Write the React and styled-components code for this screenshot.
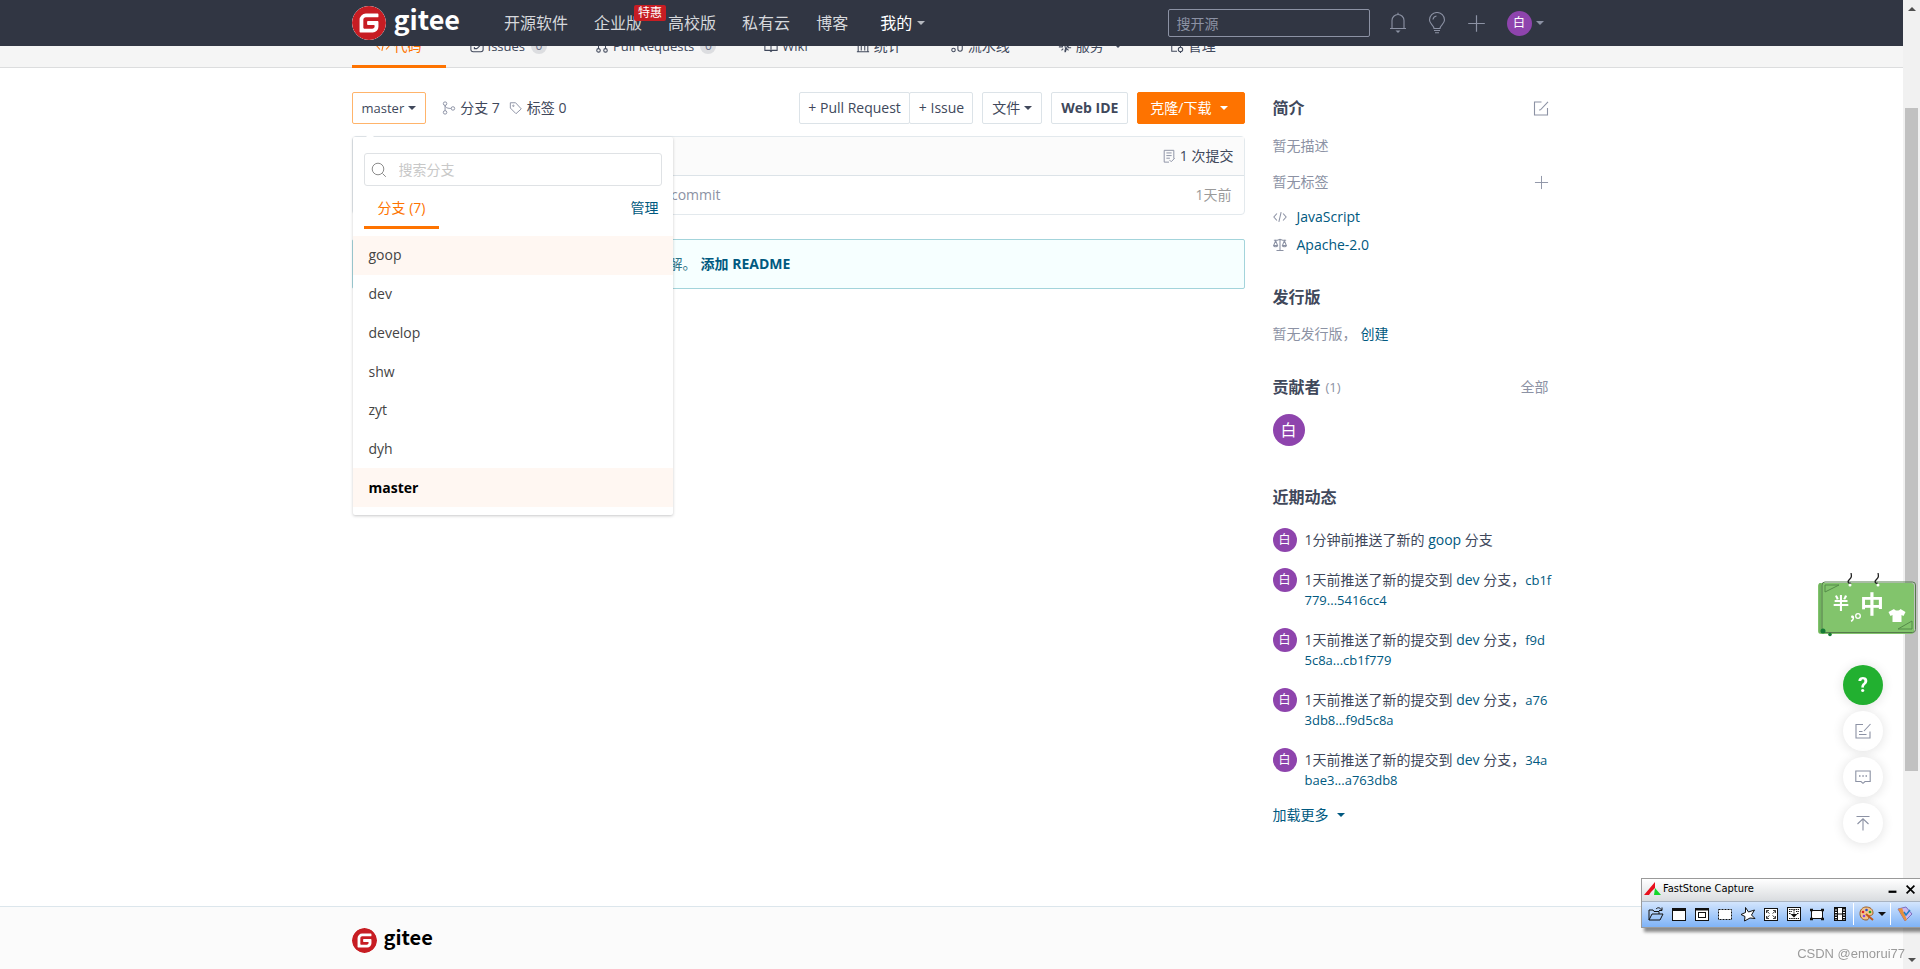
import * as React from 'react';
import styled, { createGlobalStyle, css } from 'styled-components';
import { SiGitee } from 'react-icons/si';

const GlobalStyle = createGlobalStyle`
  * { box-sizing: border-box; }
  body {
    margin: 0;
    overflow: hidden;
    color: #40485b;
    background: #fff;
    font: 14px/20px "Open Sans", "Noto Sans CJK SC", sans-serif;
  }
  button, input {
    font: inherit;
    color: inherit;
  }
  button {
    padding: 0;
    border: none;
    background: none;
    cursor: pointer;
  }
  a { color: #005980; text-decoration: none; }
  h2, p, ul { margin: 0; padding: 0; }
  ul { list-style: none; }
  svg { display: block; flex: none; }
`;

const Screen = styled.div`
  display: flex;
  min-height: 100vh;
`;

const Page = styled.div`
  flex: 1;
  min-width: 0;
  display: flex;
  flex-direction: column;
`;

const Container = styled.div`
  width: 1200px;
  max-width: 100%;
  margin: 0 auto;
`;

/* ---------- icons ---------- */

const Icon = ({ size = 14, w = size, h = size, box = '0 0 16 16', stroke = 1.2, children }) => (
  <svg width={w} height={h} viewBox={box} fill="none" stroke="currentColor" strokeWidth={stroke} aria-hidden="true">
    {children}
  </svg>
);

const CodeIcon = () => <Icon><path d="M4.500 4 1 8l3.500 4M11.500 4 15 8l-3.500 4M9.300 2.500 6.700 13.500" /></Icon>;
const IssueIcon = () => <Icon><rect x="1" y="1" width="14" height="13.500" rx="2.500" /><path d="M5 9v2h3M8 11l4-4" /></Icon>;
const PullIcon = () => <Icon><circle cx="4" cy="13" r="2" /><circle cx="12" cy="13" r="2" /><circle cx="4" cy="3" r="2" /><path d="M4 5v6M12 11V3H8" /></Icon>;
const WikiIcon = () => <Icon><path d="M8 3v11M1 2.500h5L8 4l2-1.500h5v10.500H9.500L8 14.300 6.500 13H1z" /></Icon>;
const StatIcon = () => <Icon><path d="M1 14.500h14M2.500 14V2h11v12M6 13V7M10 13V5" /></Icon>;
const PipeIcon = () => <Icon><circle cx="4" cy="12.500" r="2" /><circle cx="4" cy="4" r="2" /><path d="M6 4h3v7.500a2.500 2.500 0 0 0 5 0V4" /></Icon>;
const ServiceIcon = () => <Icon><path d="M1 9h4l2-6 2 10 2-6 1 3h3M8 12v3M4 13l2-2M12 13l-2-2" /></Icon>;
const ManageIcon = () => <Icon><path d="M8 14H2V2h8l3 3M5 7h4" /><circle cx="12" cy="12" r="2.500" /><path d="M12 8v1.500M12 14.500V16" /></Icon>;
const BranchIcon = () => (
  <Icon stroke={1.1}>
    <circle cx="3.500" cy="3" r="2" /><circle cx="3.500" cy="13" r="2" /><circle cx="12.500" cy="8.500" r="2" />
    <path d="M3.500 5v6M3.500 5c0 3 4 3.500 7 3.500" />
  </Icon>
);
const TagIcon = () => <Icon stroke={1.1}><path d="M1.500 2v6l6.500 6.500 6-5.500L7.500 2z" /><circle cx="5" cy="5.500" r=".8" /></Icon>;
const SearchIcon = () => <Icon size={16} stroke={1}><circle cx="7" cy="7" r="5.800" /><path d="m11.500 11.500 3.300 3.300" /></Icon>;
const CommitIcon = () => (
  <Icon stroke={1.1}>
    <path d="M8 15H2.500V1.500h11V11M5 4.500h6M5 7.500h6M5 10.500h4" /><path d="m8.500 12.500 2 2 4-4" />
  </Icon>
);
const EditIcon = () => <Icon size={16} stroke={1.1}><path d="M8.500 2H1.500v13h13V8M6 10l1.500-.2 7.500-8" /></Icon>;
const PlusIcon = ({ size }) => <Icon size={size} stroke={1}><path d="M8 1v14M1 8h14" /></Icon>;
const ScaleIcon = () => (
  <Icon>
    <path d="M1 2.500h4l3-1 3 1h4M8 1v13M4 14.200h8M3 3 .8 8.500h4.400zM13 3l-2.200 5.500h4.400z" />
    <path d="M.8 8.500a2.200 1.500 0 0 0 4.400 0M10.800 8.500a2.200 1.500 0 0 0 4.400 0" />
  </Icon>
);
const BellIcon = () => (
  <Icon w={18} h={22} box="0 0 18 22" stroke={1.1}>
    <path d="M1 16.500h16M3 16V8.500a6 6 0 0 1 12 0V16M9 2.500V.8" />
    <path d="M6.500 18.500h5L9 21z" fill="currentColor" stroke="none" />
  </Icon>
);
const BulbIcon = () => (
  <Icon w={18} h={22} box="0 0 18 22" stroke={1.1}>
    <path d="M6 16.500c0-3-4.500-4.500-4.500-8.500a7.500 7.500 0 0 1 15 0c0 4-4.500 5.500-4.500 8.500zM6 18.500h6M7 20.800h4M5 7.500A4 4 0 0 1 8.500 4" />
  </Icon>
);
const NoteIcon = () => <Icon size={16} stroke={1.1}><path d="M8 1.500H1v13.500h14V8.500M4 11.500h7.500M4 8.500h3.500M9 8l6.500-7" /></Icon>;
const ChatIcon = () => (
  <Icon size={16} stroke={1.1}>
    <path d="M.8 2h14.400v10.500H10L8 14.300l-2-1.800H.8z" />
    <path d="M4 7h1.500M7.300 7h1.500M10.500 7H12" strokeWidth="1.500" />
  </Icon>
);
const TopIcon = () => <Icon size={16} stroke={1.1}><path d="M1.500 1.500h13M8 15.500V4M2.500 9 8 3.800 13.500 9" /></Icon>;

const Caret = styled.i`
  display: inline-block;
  flex: none;
  border: 4px solid transparent;
  border-top-color: ${p => p.$color || 'currentColor'};
  border-bottom: none;
`;

/* ---------- logo ---------- */

const LogoLink = styled.a`
  display: flex;
  align-items: center;
  gap: ${p => (p.$small ? 7 : 8)}px;
  color: ${p => (p.$small ? '#000' : '#fff')};
  font: bold ${p => (p.$small ? 20 : 27)}px/${p => (p.$small ? 16 : 24)}px "Noto Sans CJK SC", sans-serif;
  svg {
    color: #c71d23;
    background: #fff;
    border-radius: 50%;
  }
  span { padding-bottom: ${p => (p.$small ? 8 : 9)}px; }
`;

const Logo = ({ small }) => (
  <LogoLink href="#" $small={small}>
    <SiGitee size={small ? 25 : 34} />
    <span>gitee</span>
  </LogoLink>
);

const Avatar = styled.span`
  display: flex;
  align-items: center;
  justify-content: center;
  flex: none;
  width: ${p => p.$size}px;
  height: ${p => p.$size}px;
  border-radius: 50%;
  color: #fff;
  background: #8e44ad;
  font-size: ${p => (p.$size > 30 ? 16 : 12)}px;
`;

/* ---------- top bar ---------- */

const Header = styled.header`
  position: sticky;
  top: 0;
  z-index: 10;
  height: 46px;
  background: #313643;
  color: #8c92a4;
`;

const HeaderRow = styled(Container)`
  display: flex;
  align-items: center;
  height: 46px;
`;

const MainNav = styled.nav`
  display: flex;
  gap: 26px;
  margin-left: 44px;
  font-size: 16px;
`;

const NavLink = styled.a`
  position: relative;
  color: ${p => (p.$active ? '#fff' : '#d6d8dc')};
  ${p => p.$active && css`
    display: flex;
    align-items: center;
    gap: 5px;
    margin-left: 6px;
  `}
`;

const Promo = styled.span`
  position: absolute;
  left: 40px;
  top: -8px;
  z-index: 1;
  width: 32px;
  border-radius: 2px;
  color: #fff;
  background: #c71d23;
  font-size: 12px;
  line-height: 16px;
  text-align: center;
`;

const SiteSearch = styled.input`
  width: 202px;
  height: 28px;
  margin-left: auto;
  padding: 0 8px;
  border: 1px solid #8c92a4;
  border-radius: 2px;
  background: transparent;
  &::placeholder { color: #8c92a4; }
`;

const UserTools = styled.div`
  display: flex;
  align-items: center;
  gap: 21px;
  margin: 0 8px 0 19px;
`;

const UserButton = styled.button`
  display: flex;
  align-items: center;
  gap: 4px;
`;

/* ---------- project tabs ---------- */

/* the page is scrolled, so the bar starts behind the header */
const TabBar = styled.div`
  margin-top: -20px;
  border-bottom: 1px solid #dcddde;
  background: #f5f5f5;
`;

const TabRow = styled(Container)`
  display: flex;
`;

const Tab = styled.a`
  display: flex;
  align-items: center;
  gap: 4px;
  height: 42px;
  margin-bottom: -1px;
  padding: 0 24px;
  border-bottom: 3px solid ${p => (p.$active ? '#fe7300' : 'transparent')};
  color: ${p => (p.$active ? '#fe7300' : '#40485b')};
  font-size: ${p => (p.$latin ? 13 : 14)}px;
  ${Caret} { margin-left: 6px; }
`;

const Count = styled.span`
  width: 16px;
  margin-left: 2px;
  border-radius: 8px;
  background: #dcdde0;
  color: #6b7289;
  font-size: 12px;
  line-height: 16px;
  text-align: center;
`;

/* ---------- repository ---------- */

const Body = styled(Container)`
  display: flex;
  gap: 28px;
  padding: 24px 0 81px;
`;

const Main = styled.main`
  flex: 1;
  min-width: 0;
`;

const Toolbar = styled.div`
  position: relative;
  display: flex;
  align-items: center;
  gap: 9px;
  margin-bottom: 12px;
`;

const Button = styled.button`
  display: flex;
  align-items: center;
  justify-content: center;
  gap: 4px;
  height: 32px;
  padding: 0 9px;
  border: 1px solid #dce3e8;
  border-radius: 2px;
  background: #fff;
  white-space: nowrap;
  ${p => p.$open && css`
    border-color: #ffb46b;
    font-size: 13px;
  `}
  ${p => p.$strong && css`font-weight: bold;`}
  ${p => p.$primary && css`
    gap: 8px;
    padding: 0 16px 0 12px;
    border-color: #fe7300;
    background: #fe7300;
    color: #fff;
  `}
`;

const ButtonGroup = styled.div`
  display: flex;
  margin-left: auto;
  ${Button} { padding: 0 8px; }
  ${Button} + ${Button} { margin-left: -1px; padding-left: 9px; }
`;

const Stat = styled.a`
  display: flex;
  align-items: center;
  gap: 4px;
  color: #40485b;
  svg { color: #8c92a4; }
  &:first-of-type { margin-left: 7px; }
`;

const Files = styled.div`
  border: 1px solid #e3e9ed;
  border-radius: 4px;
`;

const FileRow = styled.div`
  display: flex;
  align-items: center;
  justify-content: flex-end;
  gap: 4px;
  height: 38px;
  padding: 0 12px;
  color: #9a9a9a;
  ${p => p.$head && css`
    height: 39px;
    padding-right: 10px;
    border-bottom: 1px solid #dce3e8;
    background: #fbfbfb;
    color: #40485b;
    svg { color: #8c92a4; }
  `}
`;

const Message = styled.span`
  width: 356px;
  margin-right: auto;
  color: #8c92a4;
  text-align: right;
`;

const ReadmeTip = styled.div`
  display: flex;
  gap: 4px;
  margin-top: 24px;
  padding: 14px 19px;
  border: 1px solid #a3d4db;
  border-radius: 2px;
  background: #f6ffff;
  color: #2f7488;
  a { font-weight: bold; }
`;

const TipText = styled.span`
  width: 325px;
  text-align: right;
`;

/* ---------- branch menu ---------- */

const Menu = styled.div`
  position: absolute;
  left: 1px;
  top: 45px;
  z-index: 5;
  width: 320px;
  padding: 16px 0 8px;
  border-radius: 2px;
  background: #fff;
  box-shadow: 0 1px 3px rgba(34, 36, 38, .25);
  &::before {
    content: '';
    position: absolute;
    left: 13px;
    top: -4px;
    border: 4px solid transparent;
    border-top: none;
    border-bottom-color: #fff;
  }
`;

const MenuSearch = styled.label`
  display: flex;
  align-items: center;
  gap: 12px;
  height: 33px;
  margin: 0 11px;
  padding: 0 6px;
  border: 1px solid #dfe2e5;
  border-radius: 3px;
  color: #8c8c8c;
  input {
    flex: 1;
    min-width: 0;
    padding: 0;
    border: none;
    outline: none;
  }
  input::placeholder { color: #c8c8c8; }
`;

const MenuTabs = styled.div`
  display: flex;
  align-items: flex-start;
  justify-content: space-between;
  margin: 0 14px 7px 11px;
  padding-top: 12px;
`;

const MenuTab = styled.button`
  padding: 0 14px 8px;
  border-bottom: 3px solid #fe7300;
  color: #fe7300;
`;

const Branches = styled.ul`
  display: flex;
  flex-direction: column;
  height: 271px;
`;

const Branch = styled.li`
  flex: 1;
  display: flex;
  align-items: center;
  padding: 0 16px;
  color: ${p => (p.$current ? '#000' : '#444')};
  font-weight: ${p => (p.$current ? 'bold' : 'normal')};
  background: ${p => (p.$lit ? '#fff7f2' : 'transparent')};
`;

/* ---------- sidebar ---------- */

const Side = styled.aside`
  width: 279px;
`;

const Section = styled.section`
  margin-bottom: ${p => p.$gap}px;
`;

const SideTitle = styled.h2`
  display: flex;
  align-items: center;
  gap: 5px;
  height: 32px;
  font-size: 16px;
  small { font-size: 13px; font-weight: normal; color: #8c92a4; }
  a, button { margin-left: auto; margin-right: 3px; font-size: 14px; font-weight: normal; color: #8c92a4; }
`;

const Muted = styled.p`
  display: flex;
  align-items: center;
  justify-content: space-between;
  height: 36px;
  padding-right: 3px;
  color: #8c92a4;
`;

const About = styled.div`
  padding: 4px 0 3px;
`;

const Release = styled(Muted)`
  justify-content: flex-start;
  gap: 4px;
  margin-top: 3px;
`;

const Meta = styled.a`
  display: flex;
  align-items: center;
  gap: 10px;
  height: 28px;
  svg { color: #8c92a4; }
`;

const People = styled.div`
  padding-top: 11px;
`;

const Feed = styled.ul`
  padding-top: 15px;
`;

const FeedItem = styled.li`
  display: flex;
  gap: 8px;
  margin-bottom: 20px;
  &:last-child { margin-bottom: 17px; }
  p { padding-top: 2px; margin-bottom: -2px; word-break: break-all; }
  ${Avatar} { margin-bottom: -4px; }
`;

const Hash = styled.a`
  font-size: 13px;
`;

const More = styled.button`
  display: flex;
  align-items: center;
  gap: 8px;
  height: 20px;
  color: #005980;
`;

const Footer = styled.footer`
  flex: 1;
  padding-top: 21px;
  border-top: 1px solid #dce6ec;
  background: #fbfbfb;
`;

/* ---------- things floating over the page ---------- */

const Floats = styled.div`
  position: fixed;
  right: 37px;
  top: 665px;
  display: flex;
  flex-direction: column;
  gap: 6px;
`;

const Round = styled.button`
  display: flex;
  align-items: center;
  justify-content: center;
  width: 40px;
  height: 40px;
  border-radius: 50%;
  color: ${p => (p.$green ? '#fff' : '#8c92a4')};
  background: ${p => (p.$green ? '#22b030' : '#fff')};
  box-shadow: 0 1px 12px rgba(0, 0, 0, .12);
  font: bold 20px/24px Roboto, sans-serif;
`;

const Scrollbar = styled.div`
  position: relative;
  z-index: 11;
  display: flex;
  flex-direction: column;
  align-items: center;
  justify-content: space-between;
  width: 17px;
  height: 100vh;
  padding: 7px 0;
  background: #f1f1f1;
`;

const Arrow = styled.i`
  border: 4px solid transparent;
  ${p => (p.$up
    ? css`border-top: none; border-bottom-color: #505050;`
    : css`border-bottom: none; border-top-color: #505050;`)}
`;

const Thumb = styled.div`
  position: absolute;
  top: 108px;
  left: 2px;
  width: 13px;
  height: 663px;
  background: #c1c1c1;
`;

const Ime = styled.div`
  position: fixed;
  z-index: 12;
  right: 4px;
  top: 573px;
`;

const Capture = styled.div`
  position: fixed;
  z-index: 12;
  right: 0;
  top: 878px;
  width: 279px;
  border: 1px solid #9a9a9a;
  border-right: none;
  box-shadow: 3px 4px 3px rgba(0, 0, 0, .45);
`;

const CaptureTitle = styled.div`
  display: flex;
  align-items: center;
  gap: 2px;
  height: 22px;
  padding: 0 2px 2px;
  background: linear-gradient(#fff, #d9dcdf);
  color: #000;
  font: 11px/16px "DejaVu Sans Condensed", "DejaVu Sans", sans-serif;
  button { width: 16px; height: 18px; display: flex; align-items: center; justify-content: center; }
  button:first-of-type { margin-left: auto; }
`;

const CaptureTools = styled.div`
  display: flex;
  align-items: center;
  height: 26px;
  padding: 0 0 2px 2px;
  border-top: 1px solid #a9b4c2;
  background: linear-gradient(#d3e5fd, #7fb3f7);
  color: #111;
`;

const Tool = styled.button`
  display: flex;
  align-items: center;
  justify-content: center;
  gap: 3px;
  width: ${p => p.$w || 23}px;
  height: 22px;
`;

const Divider = styled.i`
  width: 1px;
  height: 22px;
  margin: 0 2px;
  background: #fff;
`;

const Watermark = styled.div`
  position: fixed;
  z-index: 13;
  right: 15px;
  bottom: 5px;
  color: #9b9b9b;
  font: 13px/20px "Liberation Sans", sans-serif;
`;

const tabs = [
  { icon: <CodeIcon />, label: '代码', active: true },
  { icon: <IssueIcon />, label: 'Issues', count: 0, latin: true },
  { icon: <PullIcon />, label: 'Pull Requests', count: 0, latin: true },
  { icon: <WikiIcon />, label: 'Wiki', latin: true },
  { icon: <StatIcon />, label: '统计' },
  { icon: <PipeIcon />, label: '流水线' },
  { icon: <ServiceIcon />, label: '服务', caret: true },
  { icon: <ManageIcon />, label: '管理' },
];

const branches = ['goop', 'dev', 'develop', 'shw', 'zyt', 'dyh', 'master'];

const commits = ['cb1f779...5416cc4', 'f9d5c8a...cb1f779', 'a763db8...f9d5c8a', '34abae3...a763db8'];

const captureTools = [
  ['打开', <path key="a" d="M1 14V4h4l1 1.500h5V8M1 14l3-6h11l-3 6zM8 3c2-2 4-1.500 5.500 1M14 1.500v3h-3" />],
  ['活动窗口', <g key="a"><rect x="1.500" y="2.500" width="13" height="12" fill="#fff" /><path d="M1 3.500h14" strokeWidth="3" /></g>],
  ['窗口对象', <g key="a"><rect x="1.500" y="2.500" width="13" height="12" fill="#fff" /><path d="M1 3.500h14" strokeWidth="2" /><rect x="4.500" y="6.500" width="7" height="5" /></g>],
  ['矩形区域', <rect key="a" x="1.500" y="3.500" width="13" height="10" fill="#fff" strokeDasharray="2 1" />],
  ['手绘区域', <path key="a" fill="#fff" d="M5.500 1.500 8.500 6 14.500 4l-3 5 3.500 3.500-5-.5-5.500 3 .5-4.500-4-2 4.500-2z" />],
  ['全屏', <g key="a"><rect x="1.500" y="2.500" width="13" height="12" fill="#fff" /><path d="m3.500 5 3 2.500M12.500 5l-3 2.500M3.500 12l3-2.500M12.500 12l-3-2.500M3.500 7V4.500H6M12.500 7V4.500H10M3.500 10v2.500H6M12.500 10v2.500H10" strokeWidth=".8" /></g>],
  ['滚动窗口', <g key="a"><rect x="1.500" y="1.500" width="13" height="13" fill="#fff" /><path d="M3 3.500h10M3 5.500h3M10 5.500h3M3 7.500h2M11 7.500h2M3 12.500h10M8 4v6" strokeDasharray="1.500 .7" /><path d="M4.500 8h7L8 11.500z" fill="#111" stroke="none" /></g>],
  ['固定区域', <g key="a"><rect x="2.500" y="4.500" width="11" height="8" fill="#fff" /><path d="M1 4h3M12 4h3M1 13h3M12 13h3" strokeWidth="2.500" /></g>],
  ['屏幕录像', <g key="a"><rect x="2.500" y="1.500" width="11" height="13" fill="#fff" /><path d="M5.500 1v14M10.500 1v14M5.500 8h5" /><path d="M4 2v12M12 2v12" strokeWidth="2" strokeDasharray="1.500 1" /></g>],
];

const ImeBoard = () => (
  <svg width="98" height="64" viewBox="0 0 98 64" aria-hidden="true">
    <rect x="0" y="10" width="96" height="51" rx="3" fill="#82c46c" />
    <path d="M2 10v50" stroke="#5fa450" strokeWidth="1" />
    <rect x="4" y="9" width="93.500" height="50.500" rx="3" fill="none" stroke="#557a4c" />
    <path d="M7 19v-7h14zM94 48v8H80z" fill="none" stroke="#558c49" />
    <g fill="none" stroke="#222" strokeWidth="1.300">
      <path d="M33 0c1 4 0 5-2 7s0 4 2 3M60 0c1 4 0 5-2 7s0 4 2 3" />
    </g>
    <circle cx="32" cy="12" r="1.500" fill="#fff" /><circle cx="60" cy="12" r="1.500" fill="#fff" />
    <circle cx="5" cy="58" r="2.500" fill="#167a35" /><circle cx="12" cy="61.500" r="1.800" fill="#167a35" />
    <path d="M76 36c1.500 2 5 2 6.500 0l5 3-2 4-2-1v7h-9v-7l-2 1-2-4z" fill="#fff" />
    <g fill="#fff" fontFamily="Noto Sans CJK SC, sans-serif">
      <text x="15" y="36" fontSize="16" fontWeight="bold">半</text>
      <text x="42" y="40" fontSize="24" fontWeight="bold">中</text>
      <text x="32" y="45" fontSize="15" fontWeight="bold">,</text>
    </g>
    <circle cx="40" cy="43" r="2.300" fill="none" stroke="#fff" strokeWidth="1.300" />
  </svg>
);

const App = () => (
  <>
    <GlobalStyle />
    <Screen>
      <Page>
        <Header>
          <HeaderRow>
            <Logo />
            <MainNav>
              <NavLink href="#">开源软件</NavLink>
              <NavLink href="#">企业版<Promo>特惠</Promo></NavLink>
              <NavLink href="#">高校版</NavLink>
              <NavLink href="#">私有云</NavLink>
              <NavLink href="#">博客</NavLink>
              <NavLink href="#" $active>我的<Caret $color="#b5b8bf" /></NavLink>
            </MainNav>
            <SiteSearch placeholder="搜开源" aria-label="搜开源" />
            <UserTools>
              <button aria-label="通知"><BellIcon /></button>
              <button aria-label="动态"><BulbIcon /></button>
              <button aria-label="新建"><PlusIcon size={19} /></button>
              <UserButton aria-label="个人菜单"><Avatar $size={25}>白</Avatar><Caret /></UserButton>
            </UserTools>
          </HeaderRow>
        </Header>

        <TabBar>
          <TabRow as="nav">
            {tabs.map(t => (
              <Tab href="#" key={t.label} $active={t.active} $latin={t.latin}>
                {t.icon}
                <span>{t.label}</span>
                {t.count !== undefined && <Count>{t.count}</Count>}
                {t.caret && <Caret />}
              </Tab>
            ))}
          </TabRow>
        </TabBar>

        <Body>
          <Main>
            <Toolbar>
              <Button $open>master<Caret /></Button>
              <Stat href="#"><BranchIcon />分支 7</Stat>
              <Stat href="#"><TagIcon />标签 0</Stat>
              <ButtonGroup>
                <Button>+ Pull Request</Button>
                <Button>+ Issue</Button>
              </ButtonGroup>
              <Button>文件<Caret /></Button>
              <Button $strong>Web IDE</Button>
              <Button $primary>克隆/下载<Caret /></Button>
              <Menu>
                <MenuSearch>
                  <SearchIcon />
                  <input placeholder="搜索分支" aria-label="搜索分支" />
                </MenuSearch>
                <MenuTabs>
                  <MenuTab>分支 (7)</MenuTab>
                  <a href="#">管理</a>
                </MenuTabs>
                <Branches>
                  {branches.map(b => (
                    <Branch key={b} $current={b === 'master'} $lit={b === 'master' || b === 'goop'}>{b}</Branch>
                  ))}
                </Branches>
              </Menu>
            </Toolbar>
            <Files>
              <FileRow $head><CommitIcon />1 次提交</FileRow>
              <FileRow><Message>commit</Message>1天前</FileRow>
            </Files>
            <ReadmeTip>
              <TipText>帮助感兴趣的人了解。</TipText>
              <a href="#">添加 README</a>
            </ReadmeTip>
          </Main>

          <Side>
            <Section $gap={22}>
              <SideTitle>简介<button aria-label="编辑简介"><EditIcon /></button></SideTitle>
              <About>
                <Muted>暂无描述</Muted>
                <Muted>暂无标签<button aria-label="添加标签"><PlusIcon size={15} /></button></Muted>
              </About>
              <Meta href="#"><CodeIcon />JavaScript</Meta>
              <Meta href="#"><ScaleIcon />Apache-2.0</Meta>
            </Section>
            <Section $gap={19}>
              <SideTitle>发行版</SideTitle>
              <Release>暂无发行版，<a href="#">创建</a></Release>
            </Section>
            <Section $gap={35}>
              <SideTitle>贡献者<small>(1)</small><a href="#">全部</a></SideTitle>
              <People><Avatar $size={32}>白</Avatar></People>
            </Section>
            <section>
              <SideTitle>近期动态</SideTitle>
              <Feed>
                <FeedItem>
                  <Avatar $size={24}>白</Avatar>
                  <p>1分钟前推送了新的 <a href="#">goop</a> 分支</p>
                </FeedItem>
                {commits.map(c => (
                  <FeedItem key={c}>
                    <Avatar $size={24}>白</Avatar>
                    <p>1天前推送了新的提交到 <a href="#">dev</a> 分支，<Hash href="#">{c}</Hash></p>
                  </FeedItem>
                ))}
              </Feed>
              <More>加载更多<Caret /></More>
            </section>
          </Side>
        </Body>

        <Footer>
          <Container><Logo small /></Container>
        </Footer>
      </Page>

      <Scrollbar>
        <Arrow $up />
        <Thumb />
        <Arrow />
      </Scrollbar>
    </Screen>

    <Floats>
      <Round $green>?</Round>
      <Round aria-label="反馈"><NoteIcon /></Round>
      <Round aria-label="评论"><ChatIcon /></Round>
      <Round aria-label="回到顶部"><TopIcon /></Round>
    </Floats>

    <Ime><ImeBoard /></Ime>

    <Capture>
      <CaptureTitle>
        <svg width="17" height="14" viewBox="0 0 17 14" aria-hidden="true">
          <path d="M11 0v6L7 10l-2 3H0z" fill="#e8101c" /><path d="M11 6l6 7h-7z" fill="#12d62a" />
        </svg>
        FastStone Capture
        <button aria-label="最小化"><Icon size={9}><path d="M1 12h14" strokeWidth="4" /></Icon></button>
        <button aria-label="关闭"><Icon size={9} stroke={3}><path d="m1 1 14 14M15 1 1 15" /></Icon></button>
      </CaptureTitle>
      <CaptureTools>
        {captureTools.map(([name, shape]) => (
          <Tool key={name} aria-label={name}><Icon size={16} stroke={1}>{shape}</Icon></Tool>
        ))}
        <Divider />
        <Tool $w={32} aria-label="绘图">
          <svg width="16" height="16" viewBox="0 0 16 16" aria-hidden="true">
            <path d="M7 1c4 0 7 2 7 6 0 3-3 2-4 3s1 4-3 4C3 14 1 11 1 7.500S3.500 1 7 1z" fill="#f3c48c" stroke="#9a5a20" />
            <circle cx="4" cy="6" r="1.300" fill="#d22" /><circle cx="7.500" cy="4" r="1.300" fill="#2a4ad0" />
            <circle cx="11" cy="6" r="1.300" fill="#2a2" /><circle cx="5" cy="10" r="1.300" fill="#84d" />
            <path d="m7 8 7 6" stroke="#c2571a" strokeWidth="2" />
          </svg>
          <Caret />
        </Tool>
        <Divider />
        <Tool aria-label="设置">
          <svg width="16" height="16" viewBox="0 0 16 16" aria-hidden="true">
            <path d="m1 3 8-2 6 7-7 7z" fill="#c9b8ef" stroke="#7a6fc0" />
            <path d="m1 3 4-1 5 12-2 1z" fill="#e7903c" /><path d="m7 6 2 3 4-5" fill="none" stroke="#1f7fc4" strokeWidth="1.500" />
          </svg>
        </Tool>
      </CaptureTools>
    </Capture>

    <Watermark>CSDN @emorui77</Watermark>
  </>
);

export default App;
